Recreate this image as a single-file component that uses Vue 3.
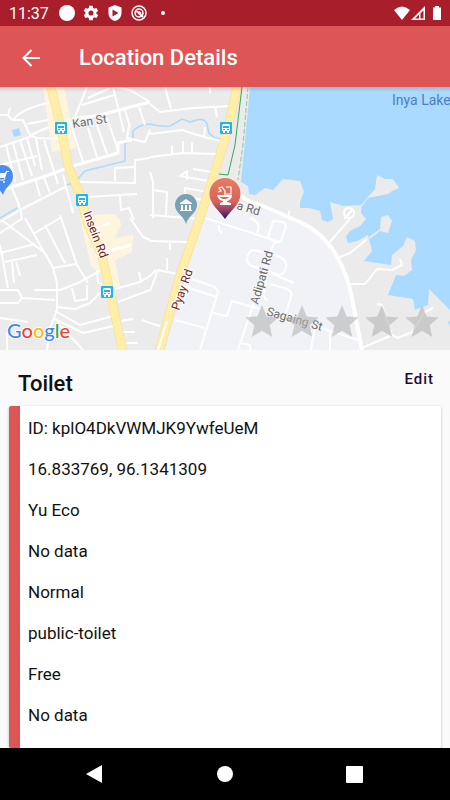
<template>
  <div class="screen">
    <div class="status-bar">
      <span class="clock">11:37</span>
      <svg width="16" height="16" viewBox="0 0 16 16"><circle cx="8" cy="8" r="8" fill="#fff" /></svg>
      <svg width="16" height="16" viewBox="1 1 22 22">
        <path fill="#fff" d="M19.4 13c0-.3.1-.6.1-1s0-.7-.1-1l2.1-1.600c.2-.2.3-.4.1-.7l-2-3.400c-.1-.2-.4-.3-.6-.2l-2.500 1c-.5-.4-1.100-.7-1.700-1l-.4-2.600c0-.3-.2-.5-.5-.5h-4c-.3 0-.5.2-.5.4L9 5.100c-.6.200-1.100.6-1.700 1l-2.500-1c-.2-.1-.5 0-.6.2l-2 3.400c-.1.200-.1.500.1.700L4.400 11a8 8 0 0 0 0 2l-2.100 1.600c-.2.200-.3.400-.1.700l2 3.400c.1.200.4.300.6.200l2.500-1c.5.400 1.100.7 1.700 1l.4 2.600c0 .3.200.5.500.5h4c.3 0 .5-.2.5-.4l.4-2.600c.6-.3 1.200-.6 1.700-1l2.500 1c.2.100.5 0 .6-.2l2-3.400c.1-.2.1-.5-.1-.7zM12 15.500a3.500 3.500 0 1 1 0-7 3.500 3.500 0 0 1 0 7z" />
      </svg>
      <svg width="16" height="16" viewBox="0 0 16 16">
        <path fill="#fff" fill-rule="evenodd" d="M8 0L14.500 2.500V8C14.500 12 12 15 8 16C4 15 1.500 12 1.500 8V2.500ZM5.500 4.500V11.500L11.500 8Z" />
      </svg>
      <svg width="16" height="16" viewBox="0 0 16 16" fill="none" stroke="#fff">
        <circle cx="8" cy="8" r="7" stroke-width="1.500" />
        <circle cx="8" cy="8" r="4" stroke-width="1.500" />
        <path stroke-width="2" d="M5.500 6L12 12" />
        <path stroke-width="1.500" d="M8 6.500L10 8.500" />
      </svg>
      <span class="dot"></span>
      <span class="spacer"></span>
      <svg width="48" height="15" viewBox="0 0 48 15">
        <path fill="#fff" d="M0 4Q8 -3 16 4L8 14Z" />
        <path fill="#fff" fill-rule="evenodd" d="M31 0V14H17ZM29.500 4L21 12.500H25V9L29.500 4ZM26.500 7.500V12.500H29.500V4.500Z" />
        <path fill="#fff" d="M41 0H45V1.500H47V14H39V1.500H41Z" />
      </svg>
    </div>

    <header class="app-bar">
      <button class="back-btn" aria-label="Back">
        <svg width="18" height="18" viewBox="0 0 18 18" fill="none" stroke="#fff" stroke-width="2">
          <path d="M18 9H1.500M9.500 1L1.500 9L9.500 17" />
        </svg>
      </button>
      <h1>Location Details</h1>
    </header>

    <section class="map">
      <svg class="map-canvas" viewBox="0 87 450 263" preserveAspectRatio="xMidYMid slice">
        <defs>
          <linearGradient id="pinFill" x1="0" y1="0" x2="0" y2="1">
            <stop offset="0" stop-color="#e57e62" />
            <stop offset="0.6" stop-color="#d9615a" />
            <stop offset="0.8" stop-color="#883c65" />
            <stop offset="1" stop-color="#21106f" />
          </linearGradient>
          <linearGradient id="barShadow" x1="0" y1="0" x2="0" y2="1">
            <stop offset="0" stop-color="#000" stop-opacity="0.14" />
            <stop offset="1" stop-color="#000" stop-opacity="0" />
          </linearGradient>
        </defs>
        <rect y="87" width="450" height="263" fill="#ebebeb" />

        <!-- campus and built-up areas -->
        <path fill="#f1f2f5" d="M208 200L238 200L300 223Q338 246 346 280L362 350H165Z" />
        <path fill="#fdf5de" d="M43 87H64L76 148L52 152ZM80 218L90 215L113 214Q120 216 121 225L115 238L133 235L132 252L115 260L120 286L105 290L100 272L91 266Z" />

        <!-- lake and streams -->
        <path fill="#aadaff" d="M250 87H450V310L429 289L428 305L415 310L413 299L388 295L396 275L404 276L412 270L411 260L416 250L415 241L407 237L403 246L392 255L391 265L364 261L372 251L368 235L357 241L348 243L346 236L350 231L360 226L366 219L361 213L362 205L343 206L330 202L333 219L328 222L322 220L320 211L309 208L300 208L300 202L304 192L300 181L283 179L273 190L265 188L255 195L249 194L248 186L241 182Z" />
        <path fill="#aadaff" d="M12 130L19 128L21 135L14 137ZM448 322L450 321V326Z" />
        <path fill="#ebebeb" d="M360 206L375 189L377 175L385 179L393 179L399 188L392 191L388 194L368 198L362 206ZM381 217L388 215L392 221L388 233L380 231L370 239L369 237L380 229Z" />
        <g class="stream">
          <path d="M67 185L75 182L85 171L125 161V144L133 138V131Q140 124 150 124Q160 127 170 126L182 119L190 122Q204 116 207 124L209 133L215 138L223 139M0 218L17 208" />
        </g>

        <g class="road">
          <path d="M0 115H7L13 120H23L30 135L37 138L60 139M13 120Q22 108 52 102M27 124L48 120M31 135L49 127M0 147L32 136M10 108L8 116" />
          <path d="M6 145L15 182M13 143L23 180M20 140L32 176M27 138L35 166M36 139L42 170M0 165L37 156M44 140L58 184M63 175L73 213M35 178L40 196M43 175L50 193M12 188L19 205" />
          <path d="M87 87L75 117M69 118L83 162M82 105L114 95M88 98L110 88M113 87L124 132M88 128L97 157M96 122L107 154M107 118L118 150M125 110L130 127M139 107L145 125M115 87L130 90L150 102M129 126L127 138L145 142L150 130" />
          <path d="M0 222L20 210L67 186M78 182L135 183V160L150 158M115 181V168L134 167M87 197L137 194M120 196L121 210L129 208L134 220" />
          <path d="M165 87L171 109M150 104L160 112L193 108L230 106M210 87V93M215 107L217 117M150 134L182 130L204 137L222 141M205 127L204 137M150 157L183 153L218 154M172 146V154M183 141V153M192 142V152" />
          <path d="M218 173L193 169M215 182L180 176L187 171V180M214 193L185 188V197L209 201M150 172L153 182V218M153 190L167 192L166 215M150 215L200 219" />
          <path d="M3 221L45 253L53 268L57 283V310L50 328L47 350M25 218L53 268M0 233L23 218M33 234L60 218M0 253L35 244M5 262L37 255M0 245L8 288M12 262L14 283M16 262L20 276M45 225L65 263M60 215L77 265L88 283M53 268L76 264" />
          <path d="M34 290H60L78 283L100 271M0 290H18L22 298L18 303H0M22 298L55 300M57 307L75 309L90 303L103 290M72 288L75 301L87 299V285M55 311L80 325L113 316M53 318L83 333L113 326M57 322L83 350M0 318L28 322M7 332V350M22 218L19 205M97 270L98 283L102 284" />
          <path d="M115 289L140 282L150 276L156 270M139 272L141 281M118 302L150 290M120 321L133 319M120 332H135M125 343H138M130 218L143 237L150 240M142 320L150 323L160 326M95 228L110 223" />
          <path d="M150 241L188 242M170 242V250M150 291L158 270L177 274L215 287L218 292L200 350M167 258V270M183 286L217 297M213 313L227 316L232 301L260 309M175 320L205 328M253 305L238 350M240 343L250 345V350M219 225V230L222 233" />
          <path d="M205 218L280 242M273 221L283 222L286 226L281 241L275 243L268 237ZM274 243L253 305M254 250L278 256Q288 260 286 268Q284 276 277 274L252 266Q245 263 248 255Q250 250 254 250M263 270L294 283M267 277L263 295L267 301M270 284L287 289Q294 292 290 300L286 313M250 218Q262 222 257 233" />
          <path d="M289 220V211" />
          <path d="M327 245L350 219M338 258L350 253L367 239M350 284H365L377 269L392 270L402 265L400 259M362 348L392 335L382 305L377 304M392 335L398 338L412 332L425 312L433 308M315 326L358 340M315 326L311 350M330 332V350" />
          <circle cx="349" cy="213" r="5" />
          <path d="M344 219L353 209" />
        </g>
        <g class="road wide">
          <path d="M0 190L15 186L43 177L73 166L118 153V143L132 140M72 119L100 115L150 102M105 252L131 245" />
        </g>
        <g class="road main">
          <path d="M237 189Q242 201 258 204L300 222Q322 232 335 253Q348 275 352 298L362 350" />
        </g>

        <path class="highway-edge" d="M51 87L61 128L68 165L80 195L88 225L102 255L123 352M237 87L228 128L217 165L200 218L180 275L159 352" />
        <path class="highway" d="M51 87L61 128L68 165L80 195L88 225L102 255L123 352M237 87L228 128L217 165L200 218L180 275L159 352" />
        <path class="lane" d="M167 321L158 350" />
        <path class="trail" d="M242 87L235 145L228 175L219 174" />
        <path class="trail dashed" d="M248 87L243 145L238 180" />

        <!-- bus stops -->
        <g v-for="stop in busStops" :key="stop.id" :transform="`translate(${stop.x} ${stop.y})`">
          <rect x="-6" y="-6" width="12" height="12" rx="1" fill="#1bb7f5" />
          <path fill="#fff" fill-rule="evenodd" d="M-3 -4H3L4 -3V3H3V5H1V3H-1V5H-3V3H-4V-3ZM-3 -2V0H3V-2ZM-3 1V2H-1V1ZM1 1V2H3V1Z" />
        </g>

        <!-- shop -->
        <path fill="#4a8df0" d="M2 165A11 11 0 0 1 13 177C13 184 5 187 3 195C0 188 -9 184 -9 177A11 11 0 0 1 2 165Z" />
        <path fill="#fff" d="M-3 173H5L6 171H9V172H7L5 178H-2Z" />
        <path fill="none" stroke="#fff" d="M5 178L4 180H-2" />
        <circle cx="4" cy="182" r="1" fill="#fff" />

        <!-- museum -->
        <path fill="#78a1b3" d="M186 194A11 11 0 0 1 197 205C197 213 188 216 186 224C184 216 175 213 175 205A11 11 0 0 1 186 194Z" />
        <path fill="#fff" d="M180 203L186 199L192 203V204H180ZM181 205H183V210H181ZM185 205H187V210H185ZM189 205H191V210H189ZM180 210H192V211H180Z" />

        <g class="labels">
          <text transform="translate(73 128) rotate(-9)">Kan St</text>
          <text class="route" transform="translate(83 213) rotate(69)">Insein Rd</text>
          <text class="route" transform="translate(179 311) rotate(-71)">Pyay Rd</text>
          <text transform="translate(258 305) rotate(-74)">Adipati Rd</text>
          <text transform="translate(236 209) rotate(16)">a Rd</text>
          <text transform="translate(266 315) rotate(16)">Sagaing St</text>
          <text class="water" x="392" y="105">Inya Lake</text>
        </g>

        <!-- selected location -->
        <path fill="url(#pinFill)" d="M225 178A15.500 15.500 0 0 1 240.500 194C240.500 204 231 210 225 219C219 210 209.500 204 209.500 194A15.500 15.500 0 0 1 225 178Z" />
        <path fill="none" stroke="#fff" stroke-width="1.200" d="M226 187H231V194H224M218 192L221 191L219 188L222 187L225 191V194" />
        <path fill="#fff" d="M217 195H232Q232 200 227 201V202L231 203V205H220V203L223 202V201Q218 200 217 195Z" />
        <path fill="#d9655b" d="M220 197H229Q228 199 225 199Q221 199 220 197Z" />

        <text class="logo" x="7" y="338"><tspan fill="#4285f4">G</tspan><tspan fill="#ea4335">o</tspan><tspan fill="#fbbc05">o</tspan><tspan fill="#4285f4">g</tspan><tspan fill="#34a853">l</tspan><tspan fill="#ea4335">e</tspan></text>
        <rect y="87" width="450" height="5" fill="url(#barShadow)" />
      </svg>
      <div class="rating" role="img" aria-label="0 / 5">
        <svg v-for="n in 5" :key="n" width="40" height="40" viewBox="0 0 24 24">
          <path d="M12 17.270L18.180 21L16.540 13.970L22 9.240L14.810 8.630L12 2L9.190 8.630L2 9.240L7.460 13.970L5.820 21Z" />
        </svg>
      </div>
    </section>

    <main class="details">
      <div class="details-header">
        <h2>{{ location.name }}</h2>
        <button class="edit-btn">Edit</button>
      </div>
      <ul class="card">
        <li v-for="(row, index) in location.rows" :key="index">{{ row }}</li>
      </ul>
    </main>

    <nav class="nav-bar">
      <button aria-label="Back">
        <svg width="18" height="18" viewBox="0 0 18 18"><path fill="#fff" d="M16 0V18L0 9Z" /></svg>
      </button>
      <button aria-label="Home">
        <svg width="18" height="18" viewBox="0 0 18 18"><circle cx="9" cy="9" r="8" fill="#fff" /></svg>
      </button>
      <button aria-label="Recent apps">
        <svg width="18" height="18" viewBox="0 0 18 18"><rect x="0" y="1" width="17" height="17" rx="1" fill="#fff" /></svg>
      </button>
    </nav>
  </div>
</template>

<script setup>
import { ref } from 'vue';

const location = ref({
  name: 'Toilet',
  rows: [
    'ID: kplO4DkVWMJK9YwfeUeM',
    '16.833769, 96.1341309',
    'Yu Eco',
    'No data',
    'Normal',
    'public-toilet',
    'Free',
    'No data'
  ]
})

const busStops = [
  { id: 1, x: 61, y: 128 },
  { id: 2, x: 82, y: 200 },
  { id: 3, x: 107, y: 292 },
  { id: 4, x: 226, y: 128 }
]
</script>

<style>
body {
  margin: 0;
  background-color: #fafafa;
}
</style>

<style scoped>
.screen {
  display: flex;
  flex-direction: column;
  height: 100vh;
  font-family: Roboto, "Liberation Sans", sans-serif;
  color: #111;
  background-color: #fafafa;
}

button {
  padding: 0;
  border: none;
  background: none;
  font-family: inherit;
  cursor: pointer;
}

svg {
  display: block;
}

.status-bar {
  flex: none;
  display: flex;
  align-items: center;
  gap: 8px;
  height: 26px;
  padding: 0 8px 0 9px;
  background-color: #a81f2b;
}

.clock {
  margin-right: 2px;
  color: #fff;
  font-size: 16px;
}

.dot {
  width: 4px;
  height: 4px;
  margin-left: 6px;
  border-radius: 50%;
  background-color: #fff;
}

.spacer {
  flex: 1;
}

.app-bar {
  flex: none;
  display: flex;
  align-items: center;
  gap: 39px;
  height: 61px;
  padding: 2px 22px 0;
  box-sizing: border-box;
  background-color: #de5555;
}

.app-bar h1 {
  margin: 0;
  color: #fff;
  font-size: 22px;
  font-weight: 500;
}

.map {
  flex: none;
  position: relative;
  height: 263px;
}

.map-canvas {
  width: 100%;
  height: 100%;
}

.stream {
  fill: none;
  stroke: #aadaff;
  stroke-width: 1.5;
}

.road {
  fill: none;
  stroke: #fff;
  stroke-width: 2;
  stroke-linejoin: round;
}

.wide {
  stroke-width: 3;
}

.main {
  stroke-width: 4;
}

.highway,
.highway-edge {
  fill: none;
  stroke: #ffeea8;
  stroke-width: 8;
  stroke-linejoin: round;
}

.highway-edge {
  stroke: #f7dd90;
  stroke-width: 9;
}

.lane {
  stroke: #fff;
  stroke-width: 2;
}

.trail {
  fill: none;
  stroke: #3aa85c;
  stroke-width: 1;
}

.dashed {
  stroke: #8cc8a0;
  stroke-dasharray: 5 2;
}

.labels text {
  font-size: 12px;
  fill: #6b6b6b;
  stroke: #f5f5f5;
  stroke-width: 2px;
  paint-order: stroke;
}

.labels .route {
  fill: #6b2020;
  stroke: #fff;
}

.labels .water {
  font-size: 14px;
  fill: #4a7fc4;
  stroke: none;
}

.logo {
  font-family: Lato, sans-serif;
  font-size: 20px;
  font-weight: 500;
  stroke: #fff;
  stroke-width: 2px;
  paint-order: stroke;
}

.rating {
  position: absolute;
  right: 8px;
  bottom: 8px;
  display: flex;
}

.rating path {
  fill: #b4b4b4;
  fill-opacity: 0.6;
}

.details {
  flex: 1;
  min-height: 0;
  display: flex;
  flex-direction: column;
  overflow: hidden;
}

.details-header {
  flex: none;
  display: flex;
  justify-content: space-between;
  align-items: flex-start;
  height: 56px;
  padding: 0 16px 0 18px;
}

.details-header h2 {
  margin: 0;
  padding-top: 18px;
  font-size: 22px;
  line-height: 32px;
  font-weight: 500;
}

.edit-btn {
  padding-top: 18px;
  color: #1c0b3c;
  font-size: 15px;
  line-height: 22px;
  font-weight: 500;
  letter-spacing: 1px;
}

.card {
  flex: 1 0 auto;
  margin: 0 9px;
  padding: 2px 8px;
  list-style: none;
  border-left: 11px solid #de5555;
  border-radius: 2px;
  background-color: #fff;
  box-shadow: 0 1px 3px rgba(0, 0, 0, 0.25);
}

.card li {
  font-size: 17px;
  line-height: 41px;
}

.nav-bar {
  flex: none;
  display: flex;
  justify-content: center;
  gap: 112px;
  height: 52px;
  background-color: #000;
}
</style>
